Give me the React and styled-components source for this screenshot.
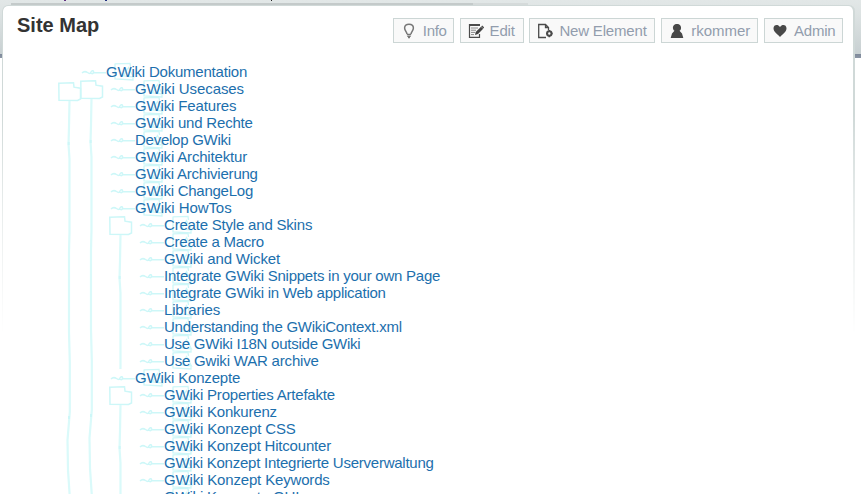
import React from 'react';
import styled, { createGlobalStyle } from 'styled-components';

const GlobalStyle = createGlobalStyle`
  * { box-sizing: border-box; }
  body { margin: 0; background: #fff; overflow: hidden; font-family: "Liberation Sans", Arial, sans-serif; }
`;

const Page = styled.div`
  height: 494px;
  overflow: hidden;
  padding: 0 8px 0 3px;
  background: linear-gradient(#e2e7e7 0, #dce2e2 16px, #c8d0d2 54px, #7e899a 54px, #8b95a5 58px, #fff 58px);
`;

const TopStrip = styled.div`
  display: grid;
  grid-template-columns: 8px 462px 55px 1fr;
  grid-template-rows: 3px 2px;
  height: 6px;
`;

const Specks = styled.svg`
  grid-column: 1 / -1;
`;

const Shade = styled.div`
  grid-row: 2;
  grid-column: ${p => p.$column};
  background: ${p => p.$color};
`;

const Panel = styled.main`
  position: relative;
  height: 520px;
  background: #fff;
  border-radius: 5px 5px 0 0;
`;

const Edge = styled.div`
  position: absolute;
  inset: -1px -2px auto -1px;
  height: 340px;
  border-radius: 6px 6px 0 0;
  border: solid #d0d9d8;
  border-width: 1px 2px 0 1px;
  box-shadow: 1px 0 2px #b4bcbc;
  mask-image: linear-gradient(#000 0, #000 110px, rgba(0,0,0,.5) 200px, transparent 330px);
  pointer-events: none;
`;

const Header = styled.header`
  display: flex;
  justify-content: space-between;
  padding: 12px 10px 0 14px;
  height: 57px;
`;

const Title = styled.h1`
  margin: -5px 0 0;
  font-size: 20px;
  line-height: 24px;
  color: #333;
`;

const Toolbar = styled.nav`
  display: flex;
  gap: 5.8px;
`;

const Button = styled.a`
  display: flex;
  align-items: center;
  width: ${p => p.$width}px;
  height: 25px;
  padding-left: 7px;
  gap: 6px;
  border: 1px solid #ccd6d5;
  background: #f9f9f9;
  color: #929dad;
  font-size: 15px;
  letter-spacing: ${p => p.$tracking}px;
  line-height: 23px;
  white-space: nowrap;
  svg { flex: none; }
`;

const Tree = styled.section`
  display: flex;
  padding-left: 55px;
`;

const Branch = styled.div`
  display: flex;
`;

const FolderColumn = styled.div`
  flex: none;
  width: ${p => p.$width}px;
  padding-top: ${p => p.$offset || 0}px;
`;

const List = styled.ul`
  list-style: none;
  margin: 0;
  padding: 0;
`;

const Entry = styled.li`
  font-size: 15px;
  line-height: 17px;
  white-space: nowrap;
`;

const Row = styled.div`
  display: flex;
  height: 17px;
`;

const Label = styled.div`
  display: grid;
  & > * { grid-area: 1 / 1; }
`;

const Link = styled.a`
  color: #1c6fad;
  letter-spacing: ${p => p.$tracking}px;
`;

const Sketch = styled.svg`
  display: block;
  flex: none;
  overflow: ${p => (p.$clip ? 'hidden' : 'visible')};
  fill: none;
  stroke: #cdf7f8;
  pointer-events: none;
`;

const buttons = [
  ['Info', 61, 'bulb', -0.3],
  ['Edit', 64, 'edit', -0.2],
  ['New Element', 126, 'page', -0.18],
  ['rkommer', 97, 'user', 0],
  ['Admin', 79, 'heart', -0.2],
];

const leaf = (name, tracking) => ({ name, tracking });

const tree = {
  name: 'GWiki Dokumentation',
  tracking: -0.21,
  children: [
    leaf('GWiki Usecases', -0.07),
    leaf('GWiki Features', -0.14),
    leaf('GWiki und Rechte', -0.2),
    leaf('Develop GWiki', -0.25),
    leaf('GWiki Architektur', -0.18),
    leaf('GWiki Archivierung', -0.22),
    leaf('GWiki ChangeLog', -0.25),
    {
      name: 'GWiki HowTos',
      tracking: -0.08,
      children: [
        leaf('Create Style and Skins', -0.2),
        leaf('Create a Macro', -0.25),
        leaf('GWiki and Wicket', -0.15),
        leaf('Integrate GWiki Snippets in your own Page', -0.24),
        leaf('Integrate GWiki in Web application', -0.24),
        leaf('Libraries', -0.17),
        leaf('Understanding the GWikiContext.xml', -0.24),
        leaf('Use GWiki I18N outside GWiki', -0.25),
        leaf('Use Gwiki WAR archive', -0.19),
      ],
    },
    {
      name: 'GWiki Konzepte',
      tracking: -0.17,
      children: [
        leaf('GWiki Properties Artefakte', -0.19),
        leaf('GWiki Konkurenz', -0.2),
        leaf('GWiki Konzept CSS', -0.15),
        leaf('GWiki Konzept Hitcounter', -0.2),
        leaf('GWiki Konzept Integrierte Userverwaltung', -0.24),
        leaf('GWiki Konzept Keywords', -0.16),
        leaf('GWiki Konzepte GUI', -0.18),
      ],
    },
  ],
};

const countRows = nodes => nodes.reduce((n, x) => n + 1 + (x.children ? countRows(x.children) : 0), 0);

function Icon({ name }) {
  return (
    <svg width="16" height="16" viewBox="0 0 16 16" fill="none" stroke="#4b4b4b">
      {name === 'bulb' && <>
        <path d="M6 11C5.700 8.700 3.600 7.700 3.600 5C3.600 2.500 5.500 1.200 8 1.200s4.400 1.300 4.400 3.800c0 2.700-2.100 3.700-2.400 6" stroke="#777" strokeWidth="1.500" />
        <path d="M5.800 11.500h4.400M6.300 13.300h3.400M7 14.700h2" stroke="#777" strokeWidth="1.300" />
      </>}
      {name === 'edit' && <>
        <path d="M11.500 11v3.400H1.500V1.500H11" strokeWidth="1.200" />
        <path d="M1 2h11" strokeWidth="2" />
        <path d="M3 5h7M3 7.200h5M3 9.400h4M3 11.600h3" stroke="#888" />
        <path d="M7 12l.7-3L13 3.700l2.200 2L10 11z" fill="#444" stroke="none" />
        <path d="M13.700 3l2 2" strokeWidth="1.500" />
      </>}
      {name === 'page' && <>
        <path d="M9 14.500H1.700v-13h6.800l3 3v2.500M8.500 1.500v3h3" strokeWidth="1.300" />
        <circle cx="12.300" cy="10.500" r="2.200" strokeWidth="2" />
        <path d="M12.300 7v1M12.300 13v1.200M9 10.500h1M14.600 10.500h1" strokeWidth="1.600" />
      </>}
      {name === 'user' && <path d="M8 1C5.300 1 3.600 3 4 5.400c.2 1.200.8 1.800 1.500 2.400L3 10.500 1.700 15h12.600L13 10.500 10.500 7.800C11.200 7.200 11.900 6.500 12 5.400 12.400 3 10.700 1 8 1z" fill="#484848" stroke="none" />}
      {name === 'heart' && <path d="M8 14C5 11 1.500 8.800 1.500 5.300 1.500 1.500 6 .8 8 4c2-3.200 6.500-2.500 6.500 1.300C14.500 8.800 11 11 8 14z" fill="#484848" stroke="none" />}
    </svg>
  );
}

function Folder({ height }) {
  return (
    <Sketch $clip width="26" height={height}>
      <path d="M.8 1.300L15.500.7 16 5.200l6.500 1V17l-3 1.500L1 18.200z" strokeWidth="1.500" />
      <path d="M11.500 19L11 45 10.500 62l1 15v73l-.5 20v80l.8 30v50L9.500 358l.5 30 2 30v80" strokeWidth="2.200" stroke="#dafafa" />
      <path d="M10.700 60v3M11 334v3" strokeWidth="2" />
    </Sketch>
  );
}

function TreeItem({ node }) {
  return (
    <Entry>
      <Row>
        <Sketch width="26" height="17">
          <path d="M2 10C4 8 6 8.500 7.500 9.500S10 11 11 9s3-1.500 2.500.5-3 1-3 0M13 9.700h13" strokeWidth="1.500" />
        </Sketch>
        <Label>
          <Sketch width="30" height="17">
            <path d="M9 .8L24 .3 24.500 4M9 .5v15.500l18 1V14M17.500 13l5-8.500 5 9.500z" strokeWidth="1.300" />
          </Sketch>
          <Link $tracking={node.tracking}>{node.name}</Link>
        </Label>
      </Row>
      {node.children && (
        <Branch>
          <FolderColumn $width={29}><Folder height={countRows(node.children) * 17} /></FolderColumn>
          <List>{node.children.map(n => <TreeItem key={n.name} node={n} />)}</List>
        </Branch>
      )}
    </Entry>
  );
}

export default function App() {
  return (
    <Page>
      <GlobalStyle />
      <TopStrip>
        <Specks width="280" height="3">
          <path d="M61 .5h2" stroke="#603080" />
          <path d="M102 .5h2" stroke="#203080" />
          <path d="M268 .5h1" stroke="#222" />
        </Specks>
        <Shade $column={2} $color="#c4caca" />
        <Shade $column={3} $color="#d5dada" />
      </TopStrip>
      <Panel>
        <Edge />
        <Header>
          <Title>Site Map</Title>
          <Toolbar>
            {buttons.map(([label, width, icon, tracking]) => (
              <Button key={label} $width={width} $tracking={tracking}><Icon name={icon} />{label}</Button>
            ))}
          </Toolbar>
        </Header>
        <Tree>
          <FolderColumn $width={22} $offset={19}><Folder height={430} /></FolderColumn>
          <List><TreeItem node={tree} /></List>
        </Tree>
      </Panel>
    </Page>
  );
}
